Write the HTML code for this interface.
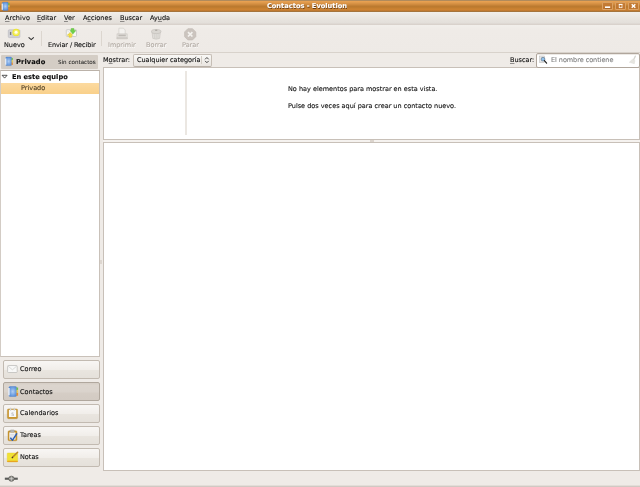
<!DOCTYPE html>
<html lang="es">
<head>
<meta charset="utf-8">
<title>Contactos - Evolution</title>
<style>
html,body{margin:0;padding:0;}
body{width:640px;height:487px;overflow:hidden;position:relative;background:#efebe7;font-family:"DejaVu Sans","Liberation Sans",sans-serif;font-size:6.5px;color:#0c0c0c;-webkit-text-stroke-width:0.1px;}
.abs{position:absolute;}
.abs{will-change:transform;}
div,span{white-space:nowrap;}
#title{left:0;top:0;width:640px;height:12px;background:linear-gradient(#a8875c 0,#b08a5c 0.5px,#e8a152 1.4px,#e09a4c 2.5px,#cf8a3e 4.5px,#bb7a30 6.3px,#bc7a2e 7px,#cb8232 9px,#cc8232 10px,#bd7730 10.7px,#a5743c 11.4px,#a5743c 12px);}
#title .t{left:12px;width:590px;top:0.5px;text-align:center;color:#fff;font-weight:bold;font-size:6.67px;line-height:10px;text-shadow:0.5px 0.5px 0.3px #6a3d12;}
.wb{top:2px;width:10.5px;height:8px;box-sizing:border-box;border:1px solid rgba(240,195,140,0.55);border-radius:1.5px;background:linear-gradient(#c67d35,#bd742e);}
#menubar{left:0;top:12px;width:640px;height:13px;background:linear-gradient(#f1efeb 0,#ebe8e4 4px,#e7e3de 7.5px,#e3dfda 11px,#d9d2cc 12.1px,#d9d2cc 13px);}
.mi{top:12.7px;line-height:10px;}
u{text-decoration:underline;text-decoration-thickness:0.5px;text-underline-offset:0.6px;text-decoration-color:rgba(30,30,30,0.45);}
#toolbar{left:0;top:25px;width:640px;height:28px;background:linear-gradient(#f2efeb 0,#efebe7 5px,#eeeae6 26.6px,#d8d2cb 27.1px,#d8d2cb 28px);}
.tl{top:39.6px;line-height:10px;}
.dis{color:#b1aaa3;text-shadow:0.5px 0.5px 0 rgba(255,255,255,0.8);}
.vsep{top:31px;width:1px;height:15px;background:#dcd6cf;}
#sbhead{left:1px;top:55px;width:97.3px;height:14px;background:#d4cdc5;border-radius:1px;}
#tree{left:0;top:70px;width:100px;height:287px;box-sizing:border-box;border:1px solid #c9c1b9;border-top-color:#bbb2a9;border-left-color:#d3ccc5;background:#fff;}
#sel{left:1px;top:82.7px;width:98px;height:11px;background:linear-gradient(#fcdaa0,#f9d08a);}
.sbtn{left:3px;width:96.5px;height:19px;box-sizing:border-box;border:1px solid #c2bab1;border-radius:2px;background:linear-gradient(#f8f6f4 0,#f1eeea 8.5px,#e9e5df 9.5px,#e4dfd9 19px);}
.sbtn.on{background:linear-gradient(#d6cec6 0,#dcd5ce 2.5px,#dad3cc 9px,#d5cdc5 10px,#d2cac2 19px);border-color:#b0a79d;}
.sbt{left:20px;line-height:10px;}
#list{left:103px;top:67px;width:537px;height:73px;box-sizing:border-box;border:1px solid #c8c0b8;background:#fff;}
#pane{left:103px;top:142px;width:537px;height:329px;box-sizing:border-box;border:1px solid #c8c0b8;background:#fff;}
#combo{left:132.5px;top:53.5px;width:79px;height:13px;box-sizing:border-box;border:1px solid #c6beb6;border-bottom-color:#b9b0a7;border-radius:2px;background:linear-gradient(#f9f8f6,#e9e5e0);}
#search{left:536px;top:53px;width:103.5px;height:14.5px;box-sizing:border-box;border:1px solid #b0a69c;border-radius:2px;background:#fff;box-shadow:inset 0 1px 0 #ece9e5;}
</style>
</head>
<body>
<div id="title" class="abs"><div class="abs t">Contactos - Evolution</div>
<div class="abs wb" style="left:602.3px"></div>
<div class="abs wb" style="left:615.3px"></div>
<div class="abs wb" style="left:628.3px"></div>
<svg class="abs" style="left:600px;top:0" width="40" height="12" viewBox="0 0 40 12">
<rect x="5" y="6.4" width="5.2" height="1.6" fill="#fff"/><rect x="5.2" y="8" width="5.2" height="0.5" fill="#8a5420"/>
<rect x="19.2" y="4.6" width="2.8" height="3.1" fill="none" stroke="#fff" stroke-width="0.7"/><rect x="18.85" y="3.9" width="3.5" height="1" fill="#fff"/>
<path d="M31.7 4.2 L35.3 7.8 M35.3 4.2 L31.7 7.8" stroke="#fff" stroke-width="1.4" fill="none"/>
</svg>
<svg class="abs" style="left:0;top:0" width="12" height="12" viewBox="0 0 12 12">
<defs><radialGradient id="bk" cx="0.5" cy="0.5" r="0.6"><stop offset="0" stop-color="#b4d0f2"/><stop offset="0.5" stop-color="#7eaae6"/><stop offset="1" stop-color="#4f88d6"/></radialGradient></defs>
<rect x="2.2" y="2.3" width="6.2" height="8.1" rx="1.1" fill="url(#bk)" stroke="#4a7cc4" stroke-width="0.4"/>
<rect x="1.6" y="3.6" width="1.3" height="6.2" fill="#e9edf2"/>
<rect x="8.3" y="3" width="1.2" height="2" fill="#6fc04a"/><rect x="8.3" y="5.2" width="1.2" height="2" fill="#e9cf45"/><rect x="8.3" y="7.4" width="1.2" height="2.4" fill="#e88a2c"/>
</svg>
</div>
<div id="menubar" class="abs"></div>
<div class="abs mi" style="left:4.6px;letter-spacing:0.1px"><u>A</u>rchivo</div>
<div class="abs mi" style="left:37.3px"><u>E</u>ditar</div>
<div class="abs mi" style="left:64px"><u>V</u>er</div>
<div class="abs mi" style="left:82.7px">A<u>c</u>ciones</div>
<div class="abs mi" style="left:119.5px"><u>B</u>uscar</div>
<div class="abs mi" style="left:149.5px">Ay<u>u</u>da</div>
<div id="toolbar" class="abs"></div>
<div class="abs tl" style="left:3.6px">Nuevo</div>
<div class="abs tl" style="left:47.6px;letter-spacing:-0.1px">Enviar / Recibir</div>
<div class="abs tl dis" style="left:107.8px">Imprimir</div>
<div class="abs tl dis" style="left:146px">Borrar</div>
<div class="abs tl dis" style="left:181.5px">Parar</div>
<div class="abs vsep" style="left:41px"></div>
<div class="abs vsep" style="left:101px"></div>
<!-- toolbar icons -->
<svg class="abs" style="left:0;top:24px" width="220" height="28" viewBox="0 0 220 28">
<!-- Nuevo -->
<rect x="8.3" y="5.8" width="11.6" height="7.8" rx="1" fill="#d3d3d7" stroke="#b6b6be" stroke-width="0.6"/>
<rect x="9.9" y="7.9" width="1.4" height="3.1" fill="#77777c"/>
<rect x="12" y="11.6" width="6.5" height="0.6" fill="#c2c2c6"/>
<circle cx="16.1" cy="8.4" r="3.7" fill="#ece636"/><circle cx="16.1" cy="8.4" r="2.6" fill="#f5f06a"/><circle cx="16.1" cy="8.3" r="1.5" fill="#fffff0"/>
<path d="M28.6 13.4 L31.2 15.6 L33.8 13.4" stroke="#2e2e2e" stroke-width="1.1" fill="none"/>
<!-- Enviar/Recibir -->
<rect x="66.3" y="5.7" width="10.2" height="6.8" rx="0.8" fill="#f7f7f6" stroke="#bfbfbc" stroke-width="0.7"/>
<path d="M66.6 6.2 L71.4 10 L76.2 6.2" stroke="#d0d0d4" stroke-width="0.5" fill="none"/>
<path d="M71.2 4.5 L73.9 4.5 L73.9 6.6 L75.8 6.6 L72.9 10.1 L70.1 6.6 L71.2 6.6 Z" fill="#6fd048" stroke="#4fb52e" stroke-width="0.4" stroke-linejoin="round"/>
<path d="M70.3 8.6 L72.8 11.3 L71.6 11.3 L71.6 13.3 L69 13.3 L69 11.3 L67.1 11.3 Z" fill="#f1de3c" stroke="#d9c02a" stroke-width="0.4" stroke-linejoin="round"/>
<!-- Imprimir (disabled) -->
<g opacity="0.75">
<path d="M118.9 4.2 L123.4 4.2 L125.2 6 L125.2 10.6 L118.9 10.6 Z" fill="#f4f3f1" stroke="#b9b6b0" stroke-width="0.5"/>
<path d="M117 9.8 L127.2 9.8 L127.2 14.4 L117 14.4 Z" fill="#e2e0dc" stroke="#b3afa9" stroke-width="0.5"/>
<rect x="118.4" y="10.6" width="7.4" height="1.7" fill="#aeaaa4"/>
<rect x="116.7" y="13.6" width="10.8" height="1.3" rx="0.4" fill="#cbc8c3" stroke="#b3afa9" stroke-width="0.4"/>
</g>
<!-- Borrar (disabled) -->
<g opacity="0.75">
<path d="M152 8.2 L152.8 14.4 Q156.2 15.9 159.6 14.4 L160.4 8.2 Z" fill="#dddbd7" stroke="#aeaaa4" stroke-width="0.5"/>
<path d="M154.2 9.6 L154.5 14.4 M156.2 9.8 L156.2 14.8 M158.2 9.6 L157.9 14.4" stroke="#b9b6b0" stroke-width="0.5"/>
<ellipse cx="156.2" cy="7.5" rx="4.8" ry="2.1" fill="#d3d0cb" stroke="#a6a29c" stroke-width="0.5"/>
<ellipse cx="156.2" cy="6.3" rx="1.3" ry="0.7" fill="#9a9690"/>
</g>
<!-- Parar (disabled) -->
<polygon points="195.84,12.63 192.53,15.94 187.87,15.94 184.56,12.63 184.56,7.97 187.87,4.66 192.53,4.66 195.84,7.97" fill="#cbc4be" stroke="#bfb8b1" stroke-width="0.6" stroke-linejoin="round"/>
<path d="M188 8.1 L192.4 12.5 M192.4 8.1 L188 12.5" stroke="#f4f2ef" stroke-width="1.7" fill="none"/>
</svg>
<!-- sidebar -->
<div id="sbhead" class="abs"></div>
<svg class="abs" style="left:4px;top:56px" width="10" height="11" viewBox="0 0 10 11">
<rect x="1.7" y="1.1" width="6" height="8.5" rx="1.1" fill="url(#bk)" stroke="#4a7cc4" stroke-width="0.4"/>
<rect x="1.1" y="2.4" width="1.3" height="6.4" fill="#eef2f6"/>
<rect x="7.6" y="1.9" width="1.2" height="2.1" fill="#6fc04a"/><rect x="7.6" y="4.2" width="1.2" height="2.1" fill="#e9cf45"/><rect x="7.6" y="6.5" width="1.2" height="2.4" fill="#e88a2c"/>
</svg>
<div class="abs" style="left:15.8px;top:56.6px;line-height:10px;font-weight:bold;font-size:6.7px;letter-spacing:0.1px;">Privado</div>
<div class="abs" style="left:57.9px;top:56.6px;line-height:10px;font-size:5.6px;color:#242424;-webkit-text-stroke-width:0.06px;">Sin contactos</div>
<div id="tree" class="abs"></div>
<div id="sel" class="abs"></div>
<svg class="abs" style="left:1px;top:74px" width="8" height="6" viewBox="0 0 8 6"><path d="M1.1 1.3 L6.1 1.3 L3.6 4.1 Z" fill="#fff" stroke="#2a2a2a" stroke-width="0.8" stroke-linejoin="round"/></svg>
<div class="abs" style="left:11.7px;top:71.5px;line-height:10px;font-weight:bold;font-size:6.67px;">En este equipo</div>
<div class="abs" style="left:21px;top:82.8px;line-height:10px;color:#4a3a20;">Privado</div>
<!-- switcher buttons -->
<div class="abs sbtn" style="top:360px"></div>
<div class="abs sbtn on" style="top:382px"></div>
<div class="abs sbtn" style="top:404px"></div>
<div class="abs sbtn" style="top:426px"></div>
<div class="abs sbtn" style="top:448px"></div>
<div class="abs sbt" style="top:364.2px">Correo</div>
<div class="abs sbt" style="top:386.9px;left:20.3px">Contactos</div>
<div class="abs sbt" style="top:408.2px">Calendarios</div>
<div class="abs sbt" style="top:430.2px">Tareas</div>
<div class="abs sbt" style="top:452.2px">Notas</div>
<svg class="abs" style="left:0;top:358px" width="24" height="112" viewBox="0 0 24 112">
<!-- Correo -->
<rect x="7.6" y="7.5" width="9.6" height="7" rx="0.8" fill="#f8f8f7" stroke="#b9b9b6" stroke-width="0.7"/>
<path d="M8 8 L12.4 11.8 L16.8 8" stroke="#c4c4c2" stroke-width="0.6" fill="none"/>
<!-- Contactos -->
<rect x="8.9" y="28.5" width="7.7" height="10" rx="1.3" fill="url(#bk)" stroke="#4a7cc4" stroke-width="0.4"/>
<rect x="8.1" y="30" width="1.6" height="7.4" fill="#e9edf2"/>
<rect x="16.5" y="29.5" width="1.6" height="2.4" fill="#6fc04a"/><rect x="16.5" y="32.2" width="1.6" height="2.4" fill="#e9cf45"/><rect x="16.5" y="34.9" width="1.6" height="2.8" fill="#e88a2c"/>
<!-- Calendarios -->
<rect x="7.4" y="50.9" width="10.2" height="9.8" rx="1.2" fill="#c9962f" stroke="#b98628" stroke-width="0.4"/>
<rect x="8.9" y="51.8" width="7.3" height="7.2" fill="#f7f8fa"/>
<rect x="10" y="50" width="1.2" height="2.4" rx="0.5" fill="#e6e6e4" stroke="#a9a9a6" stroke-width="0.3"/><rect x="13.7" y="50" width="1.2" height="2.4" rx="0.5" fill="#e6e6e4" stroke="#a9a9a6" stroke-width="0.3"/>
<text x="12.6" y="57.9" font-size="4.4" text-anchor="middle" fill="#888" font-family="DejaVu Sans, sans-serif">5</text>
<!-- Tareas -->
<rect x="8" y="72.8" width="9" height="10" rx="1.2" fill="#c9962f" stroke="#b98628" stroke-width="0.4"/>
<rect x="9.3" y="74.4" width="6.2" height="7.2" fill="#f3f4f6"/>
<path d="M10.2 76.6 H14.6 M10.2 78 H14.6 M10.2 79.4 H13" stroke="#c4c6ca" stroke-width="0.5"/>
<rect x="10.2" y="71.9" width="4.2" height="2.3" rx="0.8" fill="#b9b9b6" stroke="#8e8e8b" stroke-width="0.4"/>
<path d="M10.3 79.8 L12.5 82.2 L17 75.4" stroke="#2c5fb5" stroke-width="1.5" fill="none" stroke-linejoin="round"/>
<!-- Notas -->
<rect x="7.2" y="95" width="10.5" height="9" rx="0.7" fill="#f1e233" stroke="#e3c92e" stroke-width="0.4"/>
<rect x="7.2" y="102.7" width="10.5" height="1.4" rx="0.4" fill="#e8a322"/>
<path d="M12.6 99.3 L17.6 94.3" stroke="#b8862c" stroke-width="1.6" stroke-linecap="round"/><path d="M11.8 100.1 L12.9 99" stroke="#4a3a2a" stroke-width="1.1"/>
</svg>
<!-- statusbar icon -->
<svg class="abs" style="left:4px;top:474px" width="15" height="9" viewBox="0 0 15 9">
<g transform="translate(0,0.4)"><rect x="0.6" y="2.7" width="13.4" height="3.2" rx="0.6" fill="#f8f6f3"/>
<rect x="0.8" y="3.2" width="4.4" height="2.2" fill="#5a5a58"/><rect x="9.6" y="3.2" width="4.2" height="2.2" fill="#5a5a58"/>
<ellipse cx="7.4" cy="4.3" rx="2.7" ry="2.6" fill="#8a8a86" stroke="#55554f" stroke-width="0.6"/>
<path d="M7.4 2.2 V6.4 M5.2 4.3 H9.6" stroke="#d8d6d2" stroke-width="0.7"/></g>
</svg>
<!-- main -->
<div class="abs" style="left:103.3px;top:55.2px;line-height:10px;">M<u>o</u>strar:</div>
<div id="combo" class="abs"></div>
<div class="abs" style="left:137px;top:55.2px;line-height:10px;letter-spacing:-0.03px;">Cualquier categoría</div>
<div class="abs" style="left:201.3px;top:56px;width:1px;height:8px;background:#d2ccc4"></div>
<svg class="abs" style="left:203px;top:55px" width="8" height="10" viewBox="0 0 8 10"><path d="M2.1 4.3 L3.9 2.5 L5.7 4.3 M2.1 5.9 L3.9 7.7 L5.7 5.9" stroke="#333" stroke-width="0.9" fill="none"/></svg>
<div class="abs" style="left:509.8px;top:55.2px;line-height:10px;"><u>B</u>uscar:</div>
<div id="list" class="abs"></div>
<div id="search" class="abs"></div>
<div class="abs" style="left:550.8px;top:55.2px;line-height:10px;color:#7e7e7e;letter-spacing:-0.05px;">El nombre contiene</div>
<svg class="abs" style="left:539px;top:55px" width="9" height="10" viewBox="0 0 9 10">
<rect x="0.6" y="1" width="5" height="6.4" fill="#ececec" stroke="#b4b4b4" stroke-width="0.5"/>
<path d="M1.4 2.4 H4.6 M1.4 6.4 H3" stroke="#c4c4c4" stroke-width="0.4"/>
<circle cx="4" cy="4.2" r="1.9" fill="#8fc0ea" stroke="#5a6a7a" stroke-width="0.6"/>
<path d="M5.4 5.7 L7.6 8.1" stroke="#1a1a1a" stroke-width="1.2" stroke-linecap="round"/>
</svg>
<svg class="abs" style="left:628px;top:55px" width="10" height="10" viewBox="0 0 10 10">
<path d="M7.3 1.2 L5.6 4.8" stroke="#d6d5d0" stroke-width="1.4" stroke-linecap="round"/>
<path d="M4.4 4.3 L6.9 5.5 L6.3 8.7 L1.3 7.3 Z" fill="#e6e5e0" stroke="#dddcd6" stroke-width="0.5" stroke-linejoin="round"/>
</svg>
<div class="abs" style="left:185px;top:71px;width:2px;height:64px;background:#ebe7e2"></div>
<div class="abs" style="left:288px;top:84.4px;line-height:10px;">No hay elementos para mostrar en esta vista.</div>
<div class="abs" style="left:288px;top:101.2px;line-height:10px;">Pulse dos veces aquí para crear un contacto nuevo.</div>
<div id="pane" class="abs"></div>
<div class="abs" style="left:103px;top:140px;width:537px;height:2px;background:#f5f2ef"></div>
<div class="abs" style="left:370px;top:140px;width:4px;height:2px;background:#dbd4cd"></div>
<div class="abs" style="left:100px;top:260px;width:2px;height:4px;background:#ddd6cf"></div>
<div class="abs" style="left:0;top:485px;width:640px;height:2px;background:linear-gradient(#e3ddd8 0,#e3ddd8 1px,#d1c9c3 1px,#d1c9c3 2px)"></div>
</body>
</html>
